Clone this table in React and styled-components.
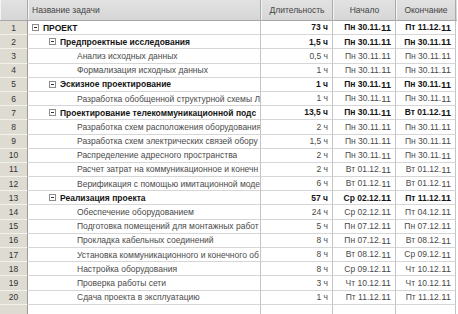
import styled, { createGlobalStyle } from 'styled-components';

const GlobalStyle = createGlobalStyle`
  html, body {
    margin: 0;
    padding: 0;
    background: #ffffff;
  }
  body {
    font-family: 'Liberation Sans', Arial, sans-serif;
  }
`;

const COLS = '28px 233px 72px 63px 60px';

const tasks = [
  { id: 1, level: 0, group: true, name: 'ПРОЕКТ', dur: '73 ч', start: 'Пн 30.11', end: 'Пт 11.12' },
  { id: 2, level: 1, group: true, name: 'Предпроектные исследования', dur: '1,5 ч', start: 'Пн 30.11', end: 'Пн 30.11' },
  { id: 3, level: 2, name: 'Анализ исходных данных', dur: '0,5 ч', start: 'Пн 30.11', end: 'Пн 30.11' },
  { id: 4, level: 2, name: 'Формализация исходных данных', dur: '1 ч', start: 'Пн 30.11', end: 'Пн 30.11' },
  { id: 5, level: 1, group: true, name: 'Эскизное проектирование', dur: '1 ч', start: 'Пн 30.11', end: 'Пн 30.11' },
  { id: 6, level: 2, name: 'Разработка обобщенной структурной схемы Л', dur: '1 ч', start: 'Пн 30.11', end: 'Пн 30.11' },
  { id: 7, level: 1, group: true, name: 'Проектирование телекоммуникационной подс', dur: '13,5 ч', start: 'Пн 30.11', end: 'Вт 01.12' },
  { id: 8, level: 2, name: 'Разработка схем расположения оборудования', dur: '2 ч', start: 'Пн 30.11', end: 'Пн 30.11' },
  { id: 9, level: 2, name: 'Разработка схем электрических связей обору', dur: '1,5 ч', start: 'Пн 30.11', end: 'Пн 30.11' },
  { id: 10, level: 2, name: 'Распределение адресного пространства', dur: '2 ч', start: 'Пн 30.11', end: 'Пн 30.11' },
  { id: 11, level: 2, name: 'Расчет затрат на коммуникационное и конечн', dur: '2 ч', start: 'Вт 01.12', end: 'Вт 01.12' },
  { id: 12, level: 2, name: 'Верификация с помощью имитационной моде', dur: '6 ч', start: 'Вт 01.12', end: 'Вт 01.12' },
  { id: 13, level: 1, group: true, name: 'Реализация проекта', dur: '57 ч', start: 'Ср 02.12', end: 'Пт 11.12' },
  { id: 14, level: 2, name: 'Обеспечение оборудованием', dur: '24 ч', start: 'Ср 02.12', end: 'Пт 04.12' },
  { id: 15, level: 2, name: 'Подготовка помещений для монтажных работ', dur: '5 ч', start: 'Пн 07.12', end: 'Пн 07.12' },
  { id: 16, level: 2, name: 'Прокладка кабельных соединений', dur: '8 ч', start: 'Пн 07.12', end: 'Вт 08.12' },
  { id: 17, level: 2, name: 'Установка коммуникационного и конечного об', dur: '8 ч', start: 'Вт 08.12', end: 'Ср 09.12' },
  { id: 18, level: 2, name: 'Настройка оборудования', dur: '8 ч', start: 'Ср 09.12', end: 'Чт 10.12' },
  { id: 19, level: 2, name: 'Проверка работы сети', dur: '3 ч', start: 'Чт 10.12', end: 'Чт 10.12' },
  { id: 20, level: 2, name: 'Сдача проекта в эксплуатацию', dur: '1 ч', start: 'Пт 11.12', end: 'Пт 11.12' },
];

export default function App() {
  return (
    <>
      <GlobalStyle />
      <Sheet>
        <HeaderRow>
          <HeaderCell />
          <HeaderCell align="left">Название задачи</HeaderCell>
          <HeaderCell>Длительность</HeaderCell>
          <HeaderCell>Начало</HeaderCell>
          <HeaderCell>Окончание</HeaderCell>
        </HeaderRow>
        {tasks.map((t) => (
          <Row key={t.id} bold={t.group}>
            <IndexCell>{t.id}</IndexCell>
            <NameCell level={t.level}>
              {t.group ? <Toggle /> : <Spacer />}
              <NameText>{t.name}</NameText>
            </NameCell>
            <NumCell>{t.dur}</NumCell>
            <NumCell>
              {t.start}.<Year>11</Year>
            </NumCell>
            <NumCell>
              {t.end}.<Year>11</Year>
            </NumCell>
          </Row>
        ))}
        <Row>
          <IndexCell />
          <NameCell level={0} />
          <NumCell />
          <NumCell />
          <NumCell />
        </Row>
      </Sheet>
    </>
  );
}

const Sheet = styled.div`
  width: 457px;
  height: 314px;
  overflow: hidden;
  font-size: 8.5px;
  color: #3c3c3c;
`;

const HeaderRow = styled.div`
  display: grid;
  grid-template-columns: ${COLS};
  height: 21px;
  background: linear-gradient(#e2e2e2, #d6d6d6);
  border-bottom: 1px solid #a8a8a8;
  box-sizing: border-box;
`;

const HeaderCell = styled.div`
  display: flex;
  align-items: center;
  justify-content: ${(p) => (p.align === 'left' ? 'flex-start' : 'center')};
  padding-left: ${(p) => (p.align === 'left' ? '3px' : '0')};
  border-left: 1px solid #f4f4f4;
  border-right: 1px solid #a9a9a9;
  color: #444444;
  font-size: 8.5px;
  white-space: nowrap;
  overflow: hidden;
`;

const Row = styled.div`
  display: grid;
  grid-template-columns: ${COLS};
  height: 14.2px;
  font-weight: ${(p) => (p.bold ? 700 : 400)};
  color: ${(p) => (p.bold ? '#151515' : '#4a4a4a')};
`;

const IndexCell = styled.div`
  display: flex;
  align-items: center;
  justify-content: center;
  background: #dedbd2;
  border-bottom: 1px solid #f3f1ec;
  border-right: 1px solid #9e9a90;
  color: #333333;
  font-weight: 400;
  box-sizing: border-box;
`;

const NameCell = styled.div`
  display: flex;
  align-items: center;
  gap: 4px;
  padding-left: ${(p) => 4 + p.level * 17}px;
  border-bottom: 1px solid #d6d6d6;
  border-right: 1px solid #c4c4c4;
  box-sizing: border-box;
  overflow: hidden;
  white-space: nowrap;
`;

const NameText = styled.span`
  overflow: hidden;
`;

const Toggle = styled.span`
  position: relative;
  flex: none;
  width: 7px;
  height: 7px;
  border: 1px solid #8c8c8c;
  background: #ffffff;
  box-sizing: border-box;
  &::after {
    content: '';
    position: absolute;
    left: 1px;
    top: 2px;
    width: 3px;
    height: 1px;
    background: #333333;
  }
`;

const Spacer = styled.span`
  flex: none;
  width: 7px;
`;

const NumCell = styled.div`
  display: flex;
  align-items: center;
  justify-content: flex-end;
  padding-right: 4px;
  border-bottom: 1px solid #d6d6d6;
  border-right: 1px solid #c4c4c4;
  box-sizing: border-box;
  white-space: nowrap;
  line-height: 1;
`;

const Year = styled.span`
  font-size: 9.5px;
  line-height: 1;
`;
